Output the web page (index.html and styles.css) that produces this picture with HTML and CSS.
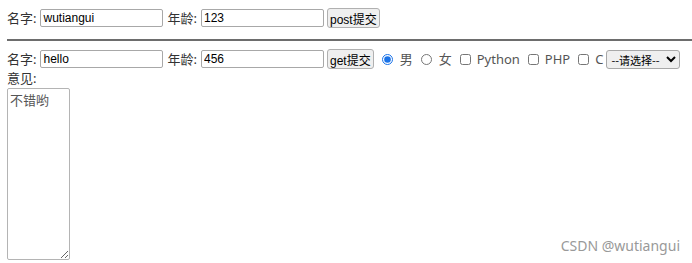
FILE: index.html
```html
<!DOCTYPE html>
<html lang="zh">
<head>
<meta charset="utf-8">
<title>表单</title>
<link rel="stylesheet" href="styles.css">
</head>
<body>
<form class="row" method="post">
  <span class="lbl">名字:</span>
  <input class="txt" type="text" name="name" value="wutiangui">
  <span class="lbl">年龄:</span>
  <input class="txt" type="text" name="age" value="123">
  <button class="btn" type="submit">post提交</button>
</form>
<hr class="sep">
<form method="get">
  <div class="row">
    <span class="lbl">名字:</span>
    <input class="txt" type="text" name="name" value="hello">
    <span class="lbl">年龄:</span>
    <input class="txt" type="text" name="age" value="456">
    <button class="btn" type="submit">get提交</button>
    <label class="opt"><input class="radio" type="radio" name="sex" value="1" checked>男</label>
    <label class="opt"><input class="radio" type="radio" name="sex" value="0">女</label>
    <label class="opt"><input class="check" type="checkbox" name="lang" value="py">Python</label>
    <label class="opt"><input class="check" type="checkbox" name="lang" value="php">PHP</label>
    <label class="opt"><input class="check" type="checkbox" name="lang" value="c">C</label>
    <select class="sel" name="city">
      <option>--请选择--</option>
    </select>
  </div>
  <div class="lbl note-lbl">意见:</div>
  <textarea class="note" name="note">不错哟</textarea>
</form>
<div class="mark">CSDN @wutiangui</div>
</body>
</html>
```

FILE: styles.css
```css
body {
  margin: 0;
  padding: 8px 0 0 7px;
  font: normal 13px/18px "Noto Sans", "Noto Sans CJK SC", sans-serif;
  color: #333;
  background: #fff;
  overflow: hidden;
}

form {
  margin: 0;
}

.row {
  display: flex;
  align-items: center;
  height: 20px;
  white-space: nowrap;
}

.row > * {
  flex-shrink: 0;
}

.lbl {
  color: #333;
}

.txt {
  box-sizing: border-box;
  width: 123px;
  height: 18px;
  margin: 0 4px 0 4px;
  padding: 0 2px;
  border: 1px solid #a8a8a8;
  border-radius: 2px;
  font: 12px "Liberation Sans", "Noto Sans CJK SC", sans-serif;
  color: #000;
}

.btn {
  box-sizing: border-box;
  height: 20px;
  margin-left: -1px;
  padding: 0 2px;
  border: 1px solid #b0b0b0;
  border-radius: 3px;
  background: #efefef;
  font: 12px "Liberation Sans", "Noto Sans CJK SC", sans-serif;
  color: #000;
}

.sep {
  height: 0;
  margin: 11px -8px 8px 0;
  border: 0;
  border-top: 2px solid #6d6d6d;
}

.opt {
  display: flex;
  align-items: center;
  margin-left: 8px;
  color: #555;
}

.radio {
  width: 11px;
  height: 11px;
  margin: 0 7px 0 0;
  accent-color: #1a73e8;
}

.check {
  width: 11px;
  height: 11px;
  margin: 0 6px 0 0;
}

.sel {
  box-sizing: border-box;
  width: 74px;
  height: 19px;
  margin-left: 3px;
  padding: 0;
  border: 1px solid #a8a8a8;
  border-radius: 3px;
  background: #efefef;
  font: 11px "Noto Sans CJK SC", sans-serif;
  color: #000;
}

.note-lbl {
  height: 19px;
  line-height: 19px;
}

.note {
  display: block;
  box-sizing: border-box;
  width: 63px;
  height: 172px;
  margin: 0;
  padding: 1px 2px;
  border: 1px solid #b4b4b4;
  border-radius: 2px;
  font: 13px "Noto Sans CJK SC", sans-serif;
  color: #555;
}

.mark {
  position: absolute;
  right: 12px;
  top: 236px;
  font: 14px "Noto Sans", sans-serif;
  color: #999;
}
```
